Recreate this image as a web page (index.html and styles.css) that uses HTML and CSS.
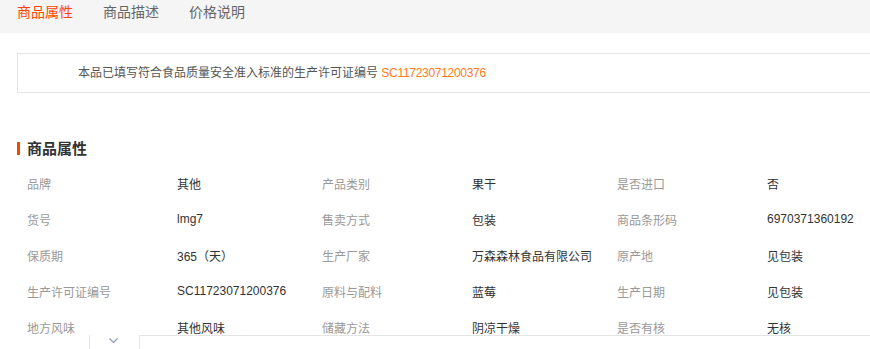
FILE: index.html
```html
<!DOCTYPE html>
<html lang="zh-CN">
<head>
<meta charset="utf-8">
<title>商品属性</title>
<link rel="stylesheet" href="styles.css">
</head>
<body>
<div class="page">
  <div class="tabs">
    <span class="tab active">商品属性</span>
    <span class="tab">商品描述</span>
    <span class="tab">价格说明</span>
  </div>
  <div class="notice">本品已填写符合食品质量安全准入标准的生产许可证编号 <span class="code">SC11723071200376</span></div>
  <h2 class="title">商品属性</h2>
  <div class="attrs">
    <span class="k">品牌</span><span class="v">其他</span>
    <span class="k">产品类别</span><span class="v">果干</span>
    <span class="k">是否进口</span><span class="v">否</span>

    <span class="k">货号</span><span class="v">lmg7</span>
    <span class="k">售卖方式</span><span class="v">包装</span>
    <span class="k">商品条形码</span><span class="v">6970371360192</span>

    <span class="k">保质期</span><span class="v">365（天）</span>
    <span class="k">生产厂家</span><span class="v">万森森林食品有限公司</span>
    <span class="k">原产地</span><span class="v">见包装</span>

    <span class="k">生产许可证编号</span><span class="v">SC11723071200376</span>
    <span class="k">原料与配料</span><span class="v">蓝莓</span>
    <span class="k">生产日期</span><span class="v">见包装</span>

    <span class="k">地方风味</span><span class="v">其他风味</span>
    <span class="k">储藏方法</span><span class="v">阴凉干燥</span>
    <span class="k">是否有核</span><span class="v">无核</span>
  </div>
  <div class="dock">
    <div class="toggle">
      <svg width="9" height="6" viewBox="0 0 9 6"><polyline points="0.5,0.5 4.5,4.5 8.5,0.5" fill="none" stroke="#8a9bb3" stroke-width="1.2"/></svg>
    </div>
    <div class="panel"></div>
  </div>
</div>
</body>
</html>
```

FILE: styles.css
```css
html, body {
  margin: 0;
  padding: 0;
  background: #fff;
}
body {
  font-family: "Liberation Sans", "Noto Sans CJK SC", sans-serif;
  font-size: 12px;
  color: #333;
}
.page {
  position: relative;
  width: 870px;
  height: 349px;
  overflow: hidden;
}
.tabs {
  height: 33px;
  background: #f5f5f5;
  padding-left: 17px;
  display: flex;
  gap: 30px;
  box-sizing: border-box;
  padding-top: 1px;
}
.tab {
  font-size: 14px;
  line-height: 22px;
  color: #666;
}
.tab.active {
  color: #ff4400;
}
.notice {
  margin: 20px 0 0 17px;
  width: 900px;
  height: 38px;
  border: 1px solid #e5e5e5;
  padding-left: 60px;
  line-height: 38px;
  color: #555;
  box-sizing: content-box;
}
.code {
  color: #ff7a1a;
  letter-spacing: -0.3px;
}
.title {
  margin: 46px 0 0 17px;
  padding-left: 10px;
  font-size: 15px;
  font-weight: bold;
  line-height: 20px;
  color: #333;
  position: relative;
}
.title::before {
  content: "";
  position: absolute;
  left: 0;
  top: 3px;
  width: 3px;
  height: 13px;
  background: #ff4400;
}
.attrs {
  margin-top: 6px;
  padding-left: 27px;
  display: grid;
  grid-template-columns: 150px 145px 150px 145px 150px 1fr;
  grid-auto-rows: 36px;
  align-items: center;
  white-space: nowrap;
}
.k {
  color: #999;
}
.v {
  color: #333;
}
.num {
  letter-spacing: -0.3px;
}
.dock {
  position: absolute;
  left: 89px;
  right: 0;
  top: 335px;
  height: 20px;
  display: flex;
}
.toggle {
  width: 50px;
  border-left: 1px solid #e5e5e5;
  background: #fff;
  display: flex;
  justify-content: center;
  padding-top: 3px;
  padding-right: 2px;
  box-sizing: border-box;
}
.panel {
  flex: 1;
  border-top: 1px solid #e5e5e5;
  border-left: 1px solid #e5e5e5;
  background: #fff;
}
```
